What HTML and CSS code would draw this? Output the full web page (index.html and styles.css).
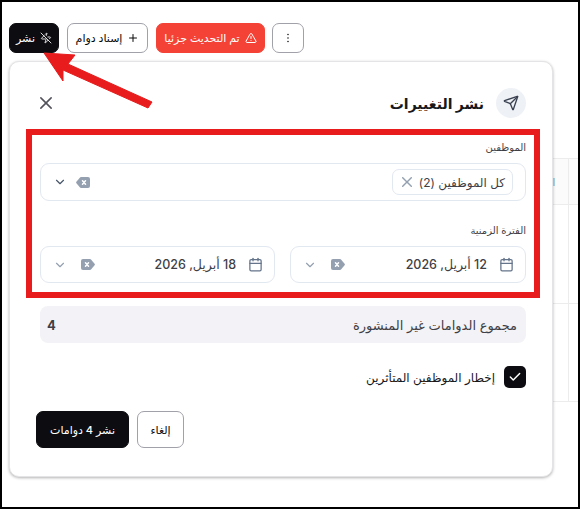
FILE: index.html
```html
<!DOCTYPE html>
<html lang="ar" dir="rtl">
<head>
  <meta charset="UTF-8" />
  <meta name="viewport" content="width=device-width, initial-scale=1.0" />
  <title>نشر التغييرات</title>
  <link rel="stylesheet" href="styles.css">
</head>
<body>
  <div class="page">
    <div class="table-behind">
      <div class="table-head"></div>
      <div class="table-row"></div>
      <div class="table-row short"></div>
      <span class="table-col"></span>
      <span class="table-tick"></span>
    </div>

    <div class="toolbar">
      <button class="btn btn-menu">
        <svg width="12" height="12" viewBox="0 0 24 24" fill="none" stroke="currentColor" stroke-width="3" stroke-linecap="round"><path d="M12 5h.01M12 12h.01M12 19h.01"/></svg>
      </button>
      <button class="btn btn-warn">
        <svg width="12" height="12" viewBox="0 0 24 24" fill="none" stroke="currentColor" stroke-width="2" stroke-linecap="round" stroke-linejoin="round"><path d="m21.73 18-8-14a2 2 0 0 0-3.48 0l-8 14A2 2 0 0 0 4 21h16a2 2 0 0 0 1.73-3"/><path d="M12 9v4"/><path d="M12 17h.01"/></svg>
        تم التحديث جزئيا
      </button>
      <button class="btn btn-assign">
        <svg width="12" height="12" viewBox="0 0 24 24" fill="none" stroke="currentColor" stroke-width="2" stroke-linecap="round"><path d="M5 12h14"/><path d="M12 5v14"/></svg>
        إسناد دوام
      </button>
      <button class="btn btn-publish">
        <svg width="12" height="12" viewBox="0 0 24 24" fill="none" stroke="currentColor" stroke-width="1.700" stroke-linecap="round" stroke-linejoin="round"><path d="M10.513 4.856 13.12 2.17a.5.5 0 0 1 .86.46l-1.377 4.317"/><path d="M15.656 10H20a1 1 0 0 1 .78 1.63l-1.72 1.773"/><path d="M16.273 16.273 10.88 21.83a.5.5 0 0 1-.86-.46l1.92-6.02A1 1 0 0 0 11 14H4a1 1 0 0 1-.78-1.63l4.507-4.643"/><path d="m2 2 20 20"/></svg>
        نشر
      </button>
    </div>

    <div class="modal">
      <div class="modal-head">
        <span class="head-icon">
          <svg width="16" height="16" viewBox="0 0 24 24" fill="none" stroke="currentColor" stroke-width="2" stroke-linecap="round" stroke-linejoin="round"><path d="M14.536 21.686a.5.5 0 0 0 .937-.024l6.5-19a.496.496 0 0 0-.635-.635l-19 6.5a.5.5 0 0 0-.024.937l7.930 3.180a2 2 0 0 1 1.112 1.110z"/><path d="m21.854 2.147-10.94 10.939"/></svg>
        </span>
        <h2>نشر التغييرات</h2>
        <svg class="close" width="12" height="12" viewBox="5 5 14 14" fill="none" stroke="currentColor" stroke-width="1.800" stroke-linecap="round"><path d="M18 6 6 18"/><path d="m6 6 12 12"/></svg>
      </div>

      <label class="field-label">الموظفين</label>
      <div class="field field-tall">
        <span class="chip">
          كل الموظفين (2)
          <svg width="10" height="10" viewBox="5 5 14 14" fill="none" stroke="currentColor" stroke-width="2" stroke-linecap="round"><path d="M18 6 6 18"/><path d="m6 6 12 12"/></svg>
        </span>
        <span class="field-end">
          <svg class="clear" width="14" height="11" viewBox="0 0 14 11"><path d="M5 0h7a2 2 0 0 1 2 2v7a2 2 0 0 1-2 2H5a1.500 1.500 0 0 1-1-.5L.4 6.300a1.300 1.300 0 0 1 0-1.600L4 .5A1.500 1.500 0 0 1 5 0z" fill="#94a0b0"/><path d="m6.500 3.800 3 3.400m0-3.400-3 3.400" stroke="#fff" stroke-width="1.500" stroke-linecap="round"/></svg>
          <svg class="chev" width="14" height="14" viewBox="0 0 24 24" fill="none" stroke="currentColor" stroke-width="2" stroke-linecap="round" stroke-linejoin="round"><path d="m6 9 6 6 6-6"/></svg>
        </span>
      </div>

      <label class="field-label second">الفترة الزمنية</label>
      <div class="date-row">
        <div class="field field-date">
          <svg class="cal" width="15" height="15" viewBox="0 0 24 24" fill="none" stroke="currentColor" stroke-width="2" stroke-linecap="round" stroke-linejoin="round"><path d="M8 2v4"/><path d="M16 2v4"/><rect width="18" height="18" x="3" y="4" rx="2"/><path d="M3 10h18"/></svg>
          <span class="date-text">12 أبريل, 2026</span>
          <span class="field-end">
            <svg class="clear flip" width="14" height="11" viewBox="0 0 14 11"><path d="M5 0h7a2 2 0 0 1 2 2v7a2 2 0 0 1-2 2H5a1.500 1.500 0 0 1-1-.5L.4 6.300a1.300 1.300 0 0 1 0-1.600L4 .5A1.500 1.500 0 0 1 5 0z" fill="#94a0b0"/><path d="m6.500 3.800 3 3.400m0-3.400-3 3.400" stroke="#fff" stroke-width="1.500" stroke-linecap="round"/></svg>
            <svg class="chev light" width="14" height="14" viewBox="0 0 24 24" fill="none" stroke="currentColor" stroke-width="2" stroke-linecap="round" stroke-linejoin="round"><path d="m6 9 6 6 6-6"/></svg>
          </span>
        </div>
        <div class="field field-date">
          <svg class="cal" width="15" height="15" viewBox="0 0 24 24" fill="none" stroke="currentColor" stroke-width="2" stroke-linecap="round" stroke-linejoin="round"><path d="M8 2v4"/><path d="M16 2v4"/><rect width="18" height="18" x="3" y="4" rx="2"/><path d="M3 10h18"/></svg>
          <span class="date-text">18 أبريل, 2026</span>
          <span class="field-end">
            <svg class="clear flip" width="14" height="11" viewBox="0 0 14 11"><path d="M5 0h7a2 2 0 0 1 2 2v7a2 2 0 0 1-2 2H5a1.500 1.500 0 0 1-1-.5L.4 6.300a1.300 1.300 0 0 1 0-1.600L4 .5A1.500 1.500 0 0 1 5 0z" fill="#94a0b0"/><path d="m6.500 3.800 3 3.400m0-3.400-3 3.400" stroke="#fff" stroke-width="1.500" stroke-linecap="round"/></svg>
            <svg class="chev light" width="14" height="14" viewBox="0 0 24 24" fill="none" stroke="currentColor" stroke-width="2" stroke-linecap="round" stroke-linejoin="round"><path d="m6 9 6 6 6-6"/></svg>
          </span>
        </div>
      </div>

      <div class="summary">
        <span>مجموع الدوامات غير المنشورة</span>
        <b>4</b>
      </div>

      <div class="notify">
        <span class="check">
          <svg width="14" height="14" viewBox="0 0 24 24" fill="none" stroke="#fff" stroke-width="2.500" stroke-linecap="round" stroke-linejoin="round"><path d="M20 6 9 17l-5-5"/></svg>
        </span>
        إخطار الموظفين المتأثرين
      </div>

      <div class="modal-foot">
        <button class="btn btn-cancel">إلغاء</button>
        <button class="btn btn-submit">نشر 4 دوامات</button>
      </div>
    </div>

    <div class="red-box"></div>
    <svg class="red-arrow" width="120" height="70" viewBox="0 0 120 70">
      <path d="M4 1 35 3 28 12 112 50 108 56 23 18 23 29z" fill="#e81c1c" stroke="#e81c1c" stroke-width="1"/>
    </svg>
  </div>
</body>
</html>
```
FILE: styles.css
```css
* {
  box-sizing: border-box;
}
body {
  margin: 0;
  font-family: Inter, "DejaVu Sans", sans-serif;
  color: #18181b;
  background: #fff;
}
.page {
  position: relative;
  width: 580px;
  height: 509px;
  border: 2px solid #000;
  overflow: hidden;
  background: #fff;
}

/* table peeking out behind the dialog */
.table-behind {
  position: absolute;
  top: 156px;
  left: 400px;
  right: 0;
}
.table-head {
  height: 47px;
  background: #fbfbfb;
  border-top: 1px solid #ececec;
  border-bottom: 1px solid #ececec;
}
.table-row {
  height: 99px;
  border-bottom: 1px solid #ececec;
}
.table-row.short {
  height: 98px;
}
.table-col {
  position: absolute;
  top: 0;
  bottom: 0;
  left: 166px;
  border-left: 1px solid #ececec;
}
.table-tick {
  position: absolute;
  top: 20px;
  left: 151px;
  width: 2px;
  height: 8px;
  background: #a9d6ea;
}

.toolbar {
  display: flex;
  justify-content: flex-end;
  gap: 8px;
  padding: 21px 0 0 7px;
}
.btn {
  display: inline-flex;
  align-items: center;
  justify-content: center;
  gap: 5px;
  height: 30px;
  padding: 0 11px;
  border: 1px solid #a1a1aa;
  border-radius: 7px;
  background: #fff;
  color: #09090b;
  font-family: inherit;
  font-size: 11px;
  font-weight: 500;
}
.btn-menu {
  width: 32px;
  margin-left: -1px;
  padding: 0;
}
.btn-warn {
  width: 109px;
  padding: 0;
  border-color: #f44336;
  background: #f44336;
  color: #fff;
}
.btn-assign {
  width: 81px;
  padding: 0;
}
.btn-publish {
  width: 50px;
  padding: 0;
  border-color: #0c0c11;
  background: #0c0c11;
  color: #fff;
}

.modal {
  position: relative;
  width: 544px;
  margin: 8px 25px 0 7px;
  padding: 26px 26px 28px 30px;
  border: 1px solid #e4e4e7;
  border-radius: 10px;
  background: #fff;
  box-shadow: 0 1px 3px rgba(0, 0, 0, 0.3);
}
.modal-head {
  display: flex;
  align-items: center;
  gap: 12px;
  height: 30px;
}
.head-icon {
  display: flex;
  align-items: center;
  justify-content: center;
  width: 30px;
  height: 30px;
  border-radius: 50%;
  background: #eef1f6;
  color: #3a4252;
}
.modal-head h2 {
  margin: 0;
  font-size: 14px;
  font-weight: 700;
}
.close {
  margin-right: auto;
  color: #52525b;
}
.field-label {
  display: block;
  margin: 21px 0 8px;
  font-size: 10px;
  line-height: 16px;
  color: #3f3f46;
}
.field-label.second {
  margin-top: 21px;
  margin-bottom: 8px;
}
.field {
  display: flex;
  align-items: center;
  height: 37px;
  padding: 0 12px;
  border: 1px solid #e2e8f0;
  border-radius: 9px;
  background: #fff;
  font-size: 12.5px;
}
.field-tall {
  height: 38px;
}
.field-date {
  padding-right: 11px;
}
.field-end {
  display: flex;
  align-items: center;
  gap: 9px;
  margin-right: auto;
}
.field-date .field-end {
  gap: 14px;
}
.chip {
  display: flex;
  align-items: center;
  gap: 7px;
  height: 26px;
  padding: 0 7px 0 9px;
  border: 1px solid #e2e8f0;
  border-radius: 7px;
  color: #3f3f46;
  font-size: 12px;
}
.chip svg {
  color: #94a0b0;
}
.chev {
  color: #475569;
}
.chev.light {
  color: #94a0b0;
}
.flip {
  transform: scaleX(-1);
}
.date-row {
  display: grid;
  grid-template-columns: 236px 235px;
  gap: 15px;
}
.cal {
  color: #64748b;
}
.date-text {
  margin-right: 12px;
  font-weight: 500;
  color: #3f3f46;
}
.summary {
  display: flex;
  justify-content: space-between;
  align-items: center;
  height: 37px;
  margin-top: 23px;
  padding: 0 9px 0 7px;
  border-radius: 8px;
  background: #f3f3f7;
  font-size: 13px;
  color: #3f3f46;
}
.notify {
  display: flex;
  align-items: center;
  gap: 9px;
  height: 22px;
  margin-top: 23px;
  font-size: 12px;
}
.check {
  display: flex;
  align-items: center;
  justify-content: center;
  width: 22px;
  height: 22px;
  border-radius: 5px;
  background: #0c0c11;
}
.modal-foot {
  display: flex;
  justify-content: flex-end;
  gap: 8px;
  margin: 23px 0 0 -4px;
}
.btn-cancel {
  width: 47px;
  height: 37px;
  padding: 0;
}
.btn-submit {
  width: 93px;
  height: 37px;
  padding: 0;
  border-color: #0c0c11;
  background: #0c0c11;
  color: #fff;
}

/* annotation drawn on top of the screenshot */
.red-box {
  position: absolute;
  top: 127px;
  left: 24px;
  width: 514px;
  height: 169px;
  border: 6px solid #e81c1c;
}
.red-arrow {
  position: absolute;
  top: 50px;
  left: 38px;
}
```
